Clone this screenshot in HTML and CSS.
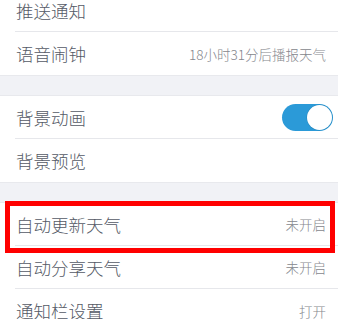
FILE: index.html
```html
<!DOCTYPE html>
<html lang="zh">
<head>
<meta charset="utf-8">
<link rel="stylesheet" href="styles.css">
</head>
<body>
<div class="list">
  <div class="group">
    <div class="row"><span class="label">推送通知</span></div>
    <div class="row"><span class="label">语音闹钟</span><span class="value">18小时31分后播报天气</span></div>
  </div>
  <div class="gap"></div>
  <div class="group">
    <div class="row"><span class="label">背景动画</span><span class="toggle"><span class="knob"></span></span></div>
    <div class="row"><span class="label">背景预览</span></div>
  </div>
  <div class="gap"></div>
  <div class="group">
    <div class="row highlighted"><span class="label">自动更新天气</span><span class="value">未开启</span><span class="mark"></span></div>
    <div class="row"><span class="label">自动分享天气</span><span class="value">未开启</span></div>
    <div class="row"><span class="label">通知栏设置</span><span class="value">打开</span></div>
  </div>
</div>
</body>
</html>
```
FILE: styles.css
```css
html, body {
  margin: 0;
  padding: 0;
  background: #ffffff;
  overflow: hidden;
}
body {
  width: 338px;
  height: 319px;
  font-family: "Noto Sans CJK SC", "Noto Sans", sans-serif;
}
.list {
  margin-top: -11px;
}
.group {
  background: #ffffff;
}
.row {
  position: relative;
  height: 43px;
  margin-left: 15px;
  padding-right: 12px;
  display: flex;
  align-items: center;
  justify-content: space-between;
  border-bottom: 1px solid #e6e7eb;
  box-sizing: border-box;
}
.row:last-child {
  border-bottom: none;
}
.label {
  font-size: 17.5px;
  font-weight: 300;
  color: #555a66;
  padding-left: 1px;
}
.value {
  font-size: 13.5px;
  font-weight: 300;
  color: #85878d;
}
.gap {
  height: 21px;
  background: #f1f2f6;
  border-top: 1px solid #e8e9ed;
  border-bottom: 1px solid #e8e9ed;
  box-sizing: border-box;
}
.toggle {
  position: relative;
  width: 51px;
  height: 27px;
  border-radius: 14px;
  background: #2b9ad8;
  margin-right: -7px;
}
.knob {
  position: absolute;
  right: 1px;
  top: 1px;
  width: 25px;
  height: 25px;
  border-radius: 50%;
  background: #ffffff;
  box-shadow: 0 0 0 0.5px rgba(0,0,0,0.12);
}
.mark {
  position: absolute;
  left: -10px;
  right: 3px;
  top: -2px;
  height: 52px;
  border: 5px solid #ff0000;
  box-sizing: border-box;
  pointer-events: none;
}
```
